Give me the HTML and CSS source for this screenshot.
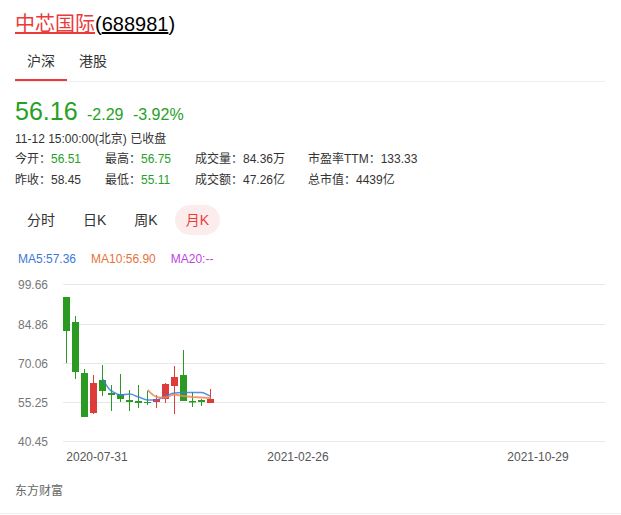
FILE: index.html
```html
<!DOCTYPE html>
<html lang="zh-CN">
<head>
<meta charset="utf-8">
<title>中芯国际(688981)</title>
<link rel="stylesheet" href="styles.css">
</head>
<body>
<div class="page">
  <div class="inner">
    <div class="title"><a class="name" href="#">中芯国际</a>(<a class="code" href="#">688981</a>)</div>
    <div class="tabs">
      <span class="tab active">沪深</span>
      <span class="tab">港股</span>
    </div>
    <div class="price-row">
      <span class="price">56.16</span>
      <span class="chg">-2.29</span>
      <span class="chg">-3.92%</span>
    </div>
    <div class="time">11-12 15:00:00(北京) 已收盘</div>
    <div class="stats">
      <span>今开：<em class="down">56.51</em></span>
      <span>最高：<em class="down">56.75</em></span>
      <span>成交量：<em>84.36万</em></span>
      <span>市盈率TTM：<em>133.33</em></span>
      <span>昨收：<em>58.45</em></span>
      <span>最低：<em class="down">55.11</em></span>
      <span>成交额：<em>47.26亿</em></span>
      <span>总市值：<em>4439亿</em></span>
    </div>
    <div class="periods">
      <span class="period">分时</span>
      <span class="period">日K</span>
      <span class="period">周K</span>
      <span class="period active">月K</span>
    </div>
    <div class="ma">
      <span class="ma5">MA5:57.36</span>
      <span class="ma10">MA10:56.90</span>
      <span class="ma20">MA20:--</span>
    </div>
    <svg class="chart" width="591" height="200" viewBox="15 270 591 200" xmlns="http://www.w3.org/2000/svg">
      <g stroke="#e8e8e8" stroke-width="1">
        <line x1="63" y1="285.5" x2="605" y2="285.5"/>
        <line x1="63" y1="325.5" x2="605" y2="325.5"/>
        <line x1="63" y1="364.5" x2="605" y2="364.5"/>
        <line x1="63" y1="403.5" x2="605" y2="403.5"/>
        <line x1="63" y1="442.5" x2="605" y2="442.5"/>
      </g>
      <g class="ylab" font-size="12" fill="#777">
        <text x="18" y="290">99.66</text>
        <text x="18" y="330">84.86</text>
        <text x="18" y="369">70.06</text>
        <text x="18" y="408">55.25</text>
        <text x="18" y="447">40.45</text>
      </g>
      <g class="xlab" font-size="12" fill="#555" text-anchor="middle">
        <text x="97" y="462">2020-07-31</text>
        <text x="298" y="462">2021-02-26</text>
        <text x="538" y="462">2021-10-29</text>
      </g>
      <g stroke="#2b9a22" fill="#2b9a22" stroke-width="1">
        <line x1="66.5" y1="298" x2="66.5" y2="364"/><rect x="63" y="298" width="7" height="34" stroke="none"/>
        <line x1="75.5" y1="317" x2="75.5" y2="380"/><rect x="72" y="323" width="7" height="50" stroke="none"/>
        <line x1="84.5" y1="370" x2="84.5" y2="418"/><rect x="81" y="374" width="7" height="44" stroke="none"/>
        <line x1="102.5" y1="366" x2="102.5" y2="397"/><rect x="99" y="381" width="7" height="11" stroke="none"/>
        <line x1="111.5" y1="386" x2="111.5" y2="412"/><rect x="108" y="394" width="7" height="2" stroke="none"/>
        <line x1="120.5" y1="375" x2="120.5" y2="403"/><rect x="117" y="395" width="7" height="5" stroke="none"/>
        <line x1="129.5" y1="391" x2="129.5" y2="412"/><rect x="126" y="401" width="7" height="2" stroke="none"/>
        <line x1="138.5" y1="386" x2="138.5" y2="409"/><rect x="135" y="402" width="7" height="2" stroke="none"/>
        <line x1="147.5" y1="392" x2="147.5" y2="406"/><rect x="144" y="403" width="7" height="1" stroke="none"/>
        <line x1="183.5" y1="351" x2="183.5" y2="402"/><rect x="180" y="376" width="7" height="26" stroke="none"/>
        <line x1="192.5" y1="393" x2="192.5" y2="408"/><rect x="189" y="402" width="7" height="1.5" stroke="none"/>
        <line x1="201.5" y1="400" x2="201.5" y2="407"/><rect x="198" y="401" width="7" height="2" stroke="none"/>
      </g>
      <g stroke="#de3b3b" fill="#de3b3b" stroke-width="1">
        <line x1="93.5" y1="376" x2="93.5" y2="415"/><rect x="90" y="384" width="7" height="30" stroke="none"/>
        <line x1="156.5" y1="396" x2="156.5" y2="409"/><rect x="153" y="400" width="7" height="3" stroke="none"/>
        <line x1="165.5" y1="384" x2="165.5" y2="404"/><rect x="162" y="385" width="7" height="15" stroke="none"/>
        <line x1="174.5" y1="367" x2="174.5" y2="415"/><rect x="171" y="378" width="7" height="9" stroke="none"/>
        <line x1="210.5" y1="390" x2="210.5" y2="404"/><rect x="207" y="400" width="7" height="4" stroke="none"/>
      </g>
      <path d="M102.5 380 C106 385 108 390 111.5 392 C115 394 117 396 120.5 396 C124 396 126 395 129.5 395 C133 395 135 397 138.5 398 C142 399 144 401 147.5 401 L156.5 401 C160 401 162 398 165.5 397 C169 396 171 394.5 174.5 394 C178 393.5 180 393.5 183.5 393.5 L201.5 393.5 C205 393.5 207 396 210.5 397" fill="none" stroke="#3c7be0" stroke-width="1.5" opacity="0.85"/>
      <path d="M147.5 391 C151 394 153 397 156.5 398 C160 398.7 162 398.6 165.5 398.5 C169 398 171 395.5 174.5 395.5 C178 395.7 180 396.7 183.5 397 L192.5 398 L201.5 398.5 L210.5 399" fill="none" stroke="#ec8a55" stroke-width="1.8" opacity="0.85"/>
    </svg>
  </div>
  <div class="footer">东方财富</div>
</div>
</body>
</html>
```
FILE: styles.css
```css
* { box-sizing: border-box; }
body {
  margin: 0;
  background: #fff;
  font-family: "Liberation Sans", "Noto Sans CJK SC", sans-serif;
  color: #333;
}
.page { width: 621px; }
.inner { padding: 0 16px 0 15px; }

.title {
  padding-top: 10px;
  height: 38px;
  font-size: 20px;
  line-height: 28px;
  color: #000;
}
.title .name { color: #e93b3b; text-decoration: underline; }
.title .code { color: #000; text-decoration: underline; }

.tabs {
  margin-top: 6px;
  display: flex;
  border-bottom: 1px solid #eee;
}
.tab {
  font-size: 14px;
  line-height: 35px;
  height: 37px;
  padding: 0 12px;
  color: #333;
  border-bottom: 2px solid transparent;
}
.tab.active { border-bottom-color: #ea3c3c; }

.price-row {
  margin-top: 14px;
  height: 30px;
  line-height: 30px;
  color: #26a126;
}
.price { font-size: 25px; }
.chg { font-size: 16px; margin-left: 5px; }

.time {
  margin-top: 3px;
  height: 20px;
  font-size: 12px;
  line-height: 20px;
  color: #333;
}

.stats {
  display: grid;
  grid-template-columns: 90px 90px 113px auto;
  grid-auto-rows: 21px;
  font-size: 12px;
  line-height: 21px;
  color: #333;
}
.stats em { font-style: normal; }
.stats em.down { color: #26a126; }

.periods {
  margin-top: 14px;
  margin-left: 1px;
  display: flex;
  gap: 6px;
  height: 30px;
}
.period {
  font-size: 14px;
  line-height: 30px;
  height: 30px;
  padding: 0 11px;
  border-radius: 15px;
  color: #333;
}
.period.active { background: #fdecec; color: #ea3c3c; }

.ma {
  margin-top: 16px;
  margin-left: 3px;
  display: flex;
  gap: 15px;
  height: 16px;
  font-size: 12px;
  line-height: 16px;
}
.ma5 { color: #3c78d8; }
.ma10 { color: #e6723a; }
.ma20 { color: #c03fe0; }

.chart { display: block; margin-top: 2px; font-family: "Liberation Sans", sans-serif; }

.footer {
  margin-top: 12px;
  padding: 0 15px 12px;
  height: 33px;
  font-size: 12px;
  line-height: 20px;
  color: #666;
  border-bottom: 1px solid #eee;
}
```
